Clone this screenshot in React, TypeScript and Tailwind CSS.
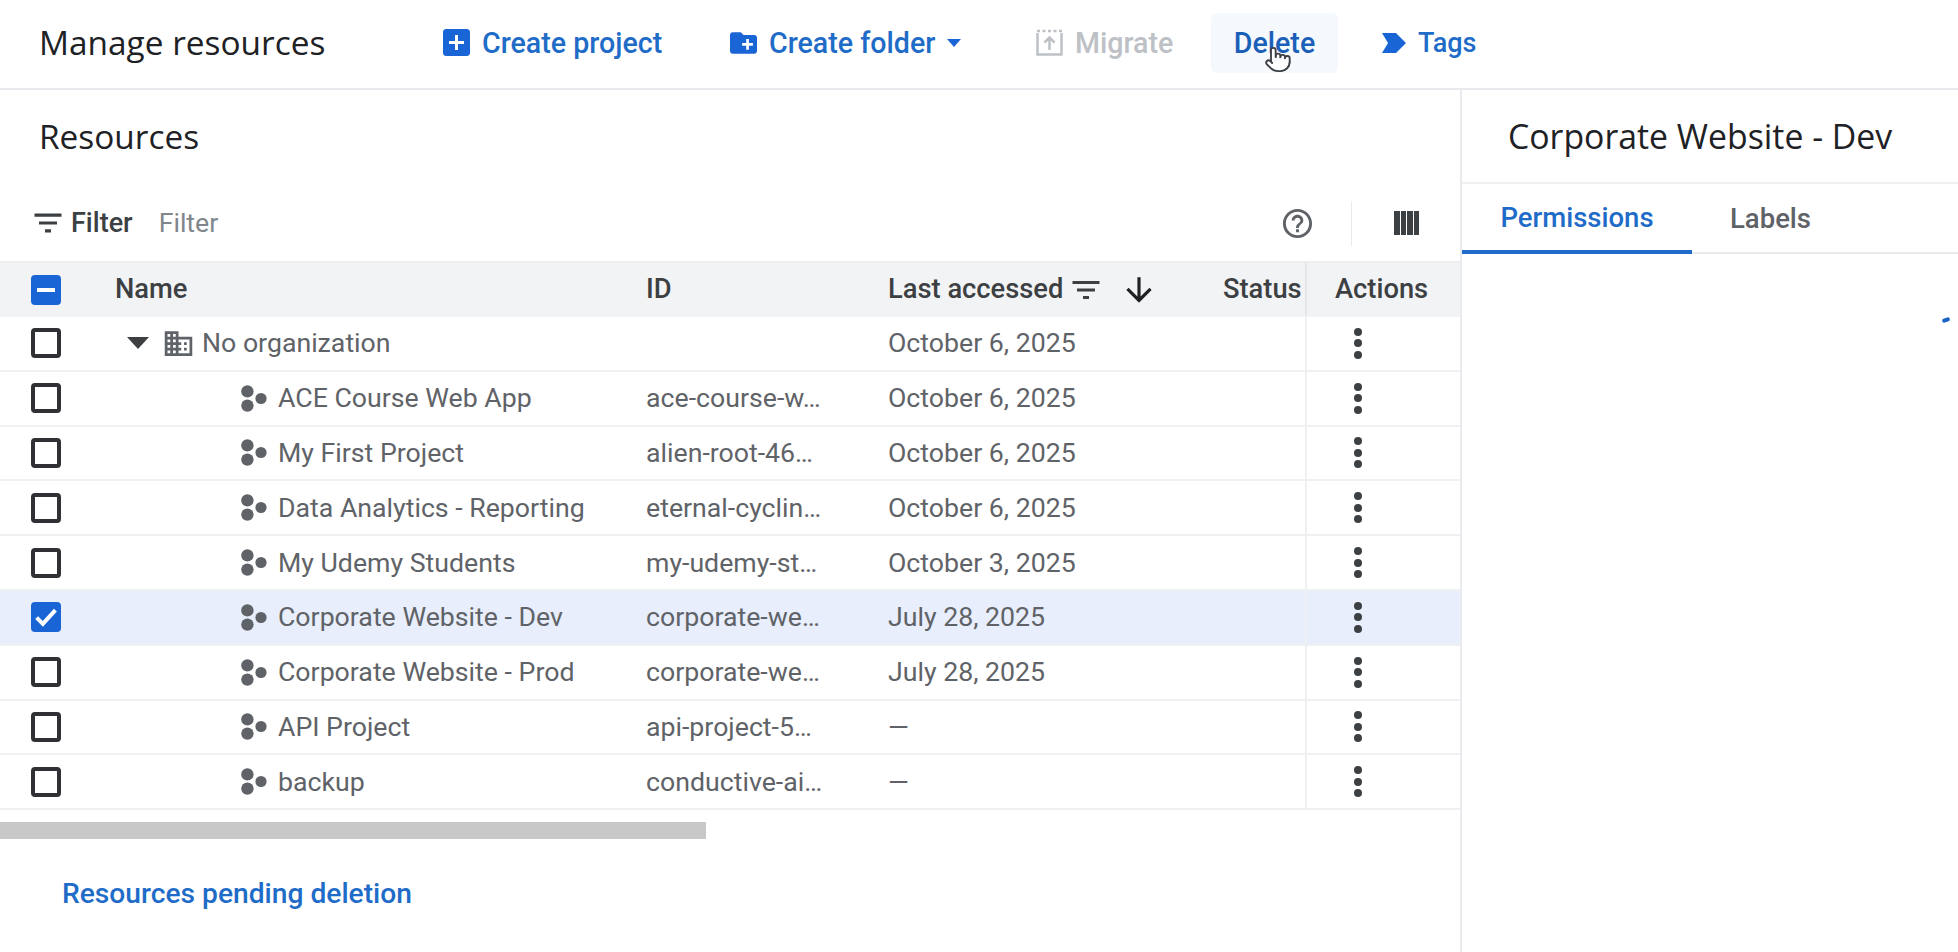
import React from "react";
import { Pointer } from "lucide-react";

const P = ({ d, className }: { d: string; className: string }) => (
  <svg viewBox="0 0 24 24" fill="currentColor" className={className} preserveAspectRatio="none"><path d={d} /></svg>
);

const FILTER = "M10 18h4v-2h-4v2zM3 6v2h18V6H3zm3 7h12v-2H6v2z";

const Check = ({ state }: { state?: "on" | "mixed" }) => {
  if (!state) return <div className="w-[30px] h-[30px] rounded-[4px] border-[4px] border-[#303134] bg-white" />;
  return (
    <div className="w-[30px] h-[30px] rounded-[4px] bg-[#1a65d6] flex items-center justify-center">
      {state === "on" ? (
        <svg viewBox="0 0 24 24" className="w-[30px] h-[30px]" fill="none" stroke="white" strokeWidth="3.2"><path d="M4.5 12.5l5 5 10-11" /></svg>
      ) : (
        <div className="w-[18px] h-[4px] bg-white" />
      )}
    </div>
  );
};

const ProjectIcon = () => (
  <svg viewBox="0 0 26 27" className="w-[26px] h-[27px] shrink-0 text-[#5f6368]" fill="currentColor">
    <circle cx="6.4" cy="6.4" r="6.2" />
    <circle cx="6.4" cy="20.6" r="6.2" />
    <circle cx="20" cy="13.5" r="5.6" />
  </svg>
);

const rows = [
  { name: "ACE Course Web App", id: "ace-course-w…", date: "October 6, 2025" },
  { name: "My First Project", id: "alien-root-46…", date: "October 6, 2025" },
  { name: "Data Analytics - Reporting", id: "eternal-cyclin…", date: "October 6, 2025" },
  { name: "My Udemy Students", id: "my-udemy-st…", date: "October 3, 2025" },
  { name: "Corporate Website - Dev", id: "corporate-we…", date: "July 28, 2025", selected: true },
  { name: "Corporate Website - Prod", id: "corporate-we…", date: "July 28, 2025" },
  { name: "API Project", id: "api-project-5…", date: "—" },
  { name: "backup", id: "conductive-ai…", date: "—" },
];

const Dots = () => (
  <div className="flex flex-col gap-[3.5px] items-center">
    <div className="w-[8px] h-[8px] rounded-full bg-[#3c4043]" />
    <div className="w-[8px] h-[8px] rounded-full bg-[#3c4043]" />
    <div className="w-[8px] h-[8px] rounded-full bg-[#3c4043]" />
  </div>
);

const Row = ({ selected, children, id, date, check }: { selected?: boolean; children: React.ReactNode; id?: string; date: string; check?: "on" }) => (
  <div className={`flex h-[54.8px] items-stretch border-b-2 border-[#eef0f1] text-[26.7px] text-[#5f6368] ${selected ? "bg-[#e8eefb]" : "bg-white"}`}>
    <div className="w-[115px] pl-[31px] flex items-center shrink-0"><Check state={check} /></div>
    <div className="w-[531px] flex items-center shrink-0">{children}</div>
    <div className="w-[242px] flex items-center shrink-0 whitespace-nowrap">{id}</div>
    <div className="w-[335px] flex items-center shrink-0">{date}</div>
    <div className="w-[82px] shrink-0" />
    <div className="flex-1 border-l-2 border-[#eef0f1] flex items-center pl-[47px]"><Dots /></div>
  </div>
);

export default function App() {
  return (
    <div className="w-[1958px] h-[952px] overflow-hidden bg-white flex flex-col relative" style={{ fontFamily: "Roboto, sans-serif" }}>
      <header className="h-[90px] shrink-0 border-b-2 border-[#e8eaed] flex items-center pl-[39px] pb-[2px] text-[#1f6cc8] text-[28.6px] font-medium">
        <h1 className="w-[404px] shrink-0 text-[33.4px] font-normal text-[#202124] pb-[1px]" style={{ fontFamily: '"Open Sans", sans-serif' }}>Manage resources</h1>
        <div className="flex items-center gap-[12px] w-[287px] shrink-0">
          <svg viewBox="3 3 18 18" className="w-[27px] h-[27px] text-[#1a65d6]" fill="currentColor"><path d="M19 3H5c-1.11 0-2 .9-2 2v14c0 1.1.89 2 2 2h14c1.1 0 2-.9 2-2V5c0-1.1-.9-2-2-2zm-2 10h-4v4h-2v-4H7v-2h4V7h2v4h4v2z" /></svg>
          <span>Create project</span>
        </div>
        <div className="flex items-center gap-[12px] w-[306px] shrink-0">
          <svg viewBox="2 4 20 16" className="w-[27px] h-[24px] text-[#1a65d6]" fill="currentColor"><path d="M20 6h-8l-2-2H4c-1.11 0-1.99.89-1.99 2L2 18c0 1.11.89 2 2 2h16c1.11 0 2-.89 2-2V8c0-1.11-.89-2-2-2zm-1 8h-3v3h-2v-3h-3v-2h3V9h2v3h3v2z" /></svg>
          <span>Create folder</span>
          <svg viewBox="0 0 14 8" className="w-[14px] h-[8px] text-[#1a65d6]" fill="currentColor"><path d="M0 0h14L7 8z" /></svg>
        </div>
        <div className="flex items-center gap-[12px] w-[175px] shrink-0 text-[#bdc1c6]">
          <svg viewBox="0 0 27 27" className="w-[27px] h-[27px]" fill="none" stroke="currentColor" strokeWidth="2.5">
            <path d="M1.5 4v21.5h24V4" />
            <path d="M1 2h25" strokeDasharray="3 2.5" />
            <path d="M13.5 21V9M8.5 13.5l5-5 5 5" />
          </svg>
          <span>Migrate</span>
        </div>
        <div className="w-[127px] h-[60px] rounded-[6px] bg-[#f5f9fd] flex items-center justify-center shrink-0 text-[#1a5fb8]">Delete</div>
        <div className="flex items-center gap-[12px] ml-[44px]">
          <svg viewBox="0 0 24 20" className="w-[24px] h-[20px] text-[#1a65d6]" fill="currentColor"><path d="M0 0h14l10 10-10 10H0l6-10z" /></svg>
          <span className="text-[27px]">Tags</span>
        </div>
        <Pointer className="absolute left-[1264px] top-[43px] w-[28px] h-[33px] text-[#3c4043]" fill="white" strokeWidth={1.6} />
      </header>

      <main className="flex flex-1 min-h-0">
        <section className="w-[1462px] shrink-0 border-r-2 border-[#e8eaed] flex flex-col">
          <div className="h-[95px] pl-[39px] pb-[2px] flex items-center text-[33.4px] text-[#202124] shrink-0" style={{ fontFamily: '"Open Sans", sans-serif' }}>Resources</div>
          <div className="h-[76px] shrink-0 flex items-center pl-[30px] pr-[41px]">
            <P d={FILTER} className="w-[36px] h-[38px] text-[#3c4043]" />
            <span className="ml-[5px] text-[27px] font-medium text-[#3c4043]">Filter</span>
            <span className="ml-[26px] text-[26.7px] text-[#80868b]">Filter</span>
            <div className="ml-auto flex items-center">
              <P d="M11 18h2v-2h-2v2zm1-16C6.48 2 2 6.48 2 12s4.48 10 10 10 10-4.48 10-10S17.52 2 12 2zm0 18c-4.41 0-8-3.59-8-8s3.59-8 8-8 8 3.59 8 8-3.59 8-8 8zm0-14c-2.21 0-4 1.79-4 4h2c0-1.1.9-2 2-2s2 .9 2 2c0 2-3 1.75-3 5h2c0-2.25 3-2.5 3-5 0-2.21-1.79-4-4-4z" className="w-[35px] h-[35px] text-[#5f6368]" />
              <div className="w-px h-[45px] bg-[#e8eaed] ml-[36px] mr-[42px]" />
              <div className="flex gap-[1px] h-[24px]">
                <div className="w-[5.5px] bg-[#3c4043]" />
                <div className="w-[5.5px] bg-[#3c4043]" />
                <div className="w-[5.5px] bg-[#3c4043]" />
                <div className="w-[5.5px] bg-[#3c4043]" />
              </div>
            </div>
          </div>

          <div className="flex h-[56px] shrink-0 bg-[#f1f3f4] border-t-2 border-[#eceef0] pb-[1px] text-[27.3px] font-medium text-[#3c4043]">
            <div className="w-[115px] pl-[31px] flex items-center shrink-0"><Check state="mixed" /></div>
            <div className="w-[531px] flex items-center shrink-0">Name</div>
            <div className="w-[242px] flex items-center shrink-0">ID</div>
            <div className="w-[335px] flex items-center shrink-0">
              <span>Last accessed</span>
              <P d={FILTER} className="w-[36px] h-[36px] ml-[5px] text-[#3c4043]" />
              <P d="M20 12l-1.41-1.41L13 16.17V4h-2v12.17l-5.58-5.59L4 12l8 8 8-8z" className="w-[38px] h-[38px] ml-[16px] text-[#202124]" />
            </div>
            <div className="w-[82px] flex items-center shrink-0">Status</div>
            <div className="flex-1 border-l-2 border-[#e4e6e8] flex items-center pl-[28px]">Actions</div>
          </div>

          <Row date="October 6, 2025">
            <svg viewBox="0 0 22 12" className="w-[22px] h-[12px] ml-[12px] text-[#3c4043]" fill="currentColor"><path d="M0 0h22L11 12z" /></svg>
            <P d="M12 7V3H2v18h20V7H12zM6 19H4v-2h2v2zm0-4H4v-2h2v2zm0-4H4V9h2v2zm0-4H4V5h2v2zm4 12H8v-2h2v2zm0-4H8v-2h2v2zm0-4H8V9h2v2zm0-4H8V5h2v2zm10 12h-8v-2h2v-2h-2v-2h2v-2h-2V9h8v10zm-2-8h-2v2h2v-2zm0 4h-2v2h2v-2z" className="w-[33px] h-[33px] ml-[13px] text-[#5f6368]" />
            <span className="ml-[7px]">No organization</span>
          </Row>
          {rows.map((r) => (
            <Row key={r.name} id={r.id} date={r.date} selected={r.selected} check={r.selected ? "on" : undefined}>
              <div className="ml-[126px] mr-[11px]"><ProjectIcon /></div>
              <span className="whitespace-nowrap">{r.name}</span>
            </Row>
          ))}

          <div className="mt-[12px] h-[17px] w-[706px] bg-[#c8c8c8] shrink-0" />
          <div className="mt-[38px] pl-[62px] text-[28.2px] leading-[34px] font-medium text-[#1f6cc8]">Resources pending deletion</div>
        </section>

        <aside className="flex-1 min-w-0 flex flex-col">
          <div className="h-[94px] shrink-0 border-b-2 border-[#eef0f1] flex items-center pl-[46px] text-[33.8px] text-[#202124] whitespace-nowrap" style={{ fontFamily: '"Open Sans", sans-serif' }}>Corporate Website - Dev</div>
          <div className="h-[70px] shrink-0 border-b-2 border-[#e8eaed] flex text-[27.5px] font-medium">
            <div className="w-[230px] h-[70px] border-b-[4px] border-[#1f6cc8] flex items-center justify-center pt-[2px] text-[#1f6cc8]">Permissions</div>
            <div className="flex items-center ml-[38px] pt-[2px] text-[#5f6368]">Labels</div>
          </div>
          <div className="flex-1 flex justify-end pr-[8px] pt-[64px]">
            <div className="w-[8px] h-[4px] bg-[#1a65c4] rounded-full -rotate-[20deg]" />
          </div>
        </aside>
      </main>
    </div>
  );
}
